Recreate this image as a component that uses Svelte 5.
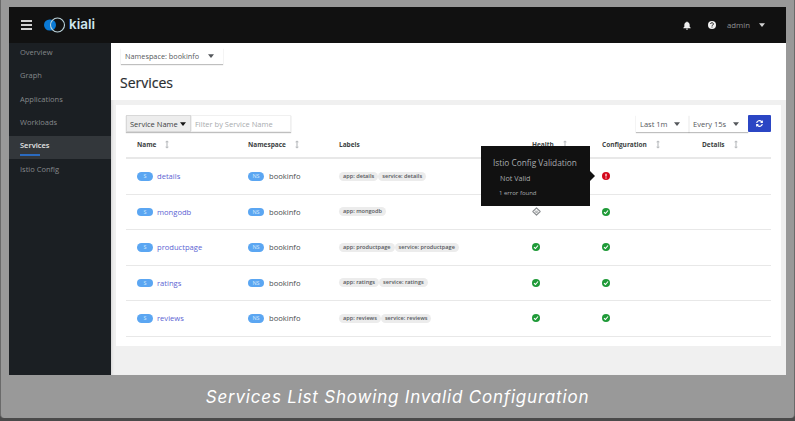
<script>
  const navItems = ['Overview', 'Graph', 'Applications', 'Workloads', 'Services', 'Istio Config'];
  const activeNav = 'Services';
  const services = [
    { name: 'details', labels: ['app: details', 'service: details'], health: 'none', config: 'error' },
    { name: 'mongodb', labels: ['app: mongodb'], health: 'na', config: 'ok' },
    { name: 'productpage', labels: ['app: productpage', 'service: productpage'], health: 'ok', config: 'ok' },
    { name: 'ratings', labels: ['app: ratings', 'service: ratings'], health: 'ok', config: 'ok' },
    { name: 'reviews', labels: ['app: reviews', 'service: reviews'], health: 'ok', config: 'ok' }
  ];
  const columns = [
    { title: 'Name', sort: true },
    { title: 'Namespace', sort: true },
    { title: 'Labels', sort: false },
    { title: 'Health', sort: true },
    { title: 'Configuration', sort: true },
    { title: 'Details', sort: true }
  ];
</script>

{#snippet caret()}
  <svg class="caret" viewBox="0 0 8 5" width="6" height="4"><path d="M0 0h8L4 5z" fill="currentColor" /></svg>
{/snippet}

{#snippet sortIcon()}
  <svg class="sort" viewBox="0 0 5 10" width="4" height="9">
    <path d="M2.5 0 5 2.2H3.2v5.6H5L2.5 10 0 7.800h1.800V2.200H0z" fill="#b8bbbe" />
  </svg>
{/snippet}

{#snippet statusOk()}
  <svg class="status" viewBox="0 0 16 16" width="8" height="8">
    <circle cx="8" cy="8" r="8" fill="#1f9a38" />
    <path d="M4 8.500 7 11l5-6" fill="none" stroke="#fff" stroke-width="2.200" />
  </svg>
{/snippet}

{#snippet statusError()}
  <svg class="status" viewBox="0 0 16 16" width="8" height="8">
    <circle cx="8" cy="8" r="8" fill="#d4071b" />
    <path d="M8 3.500v5.500M8 11v2" stroke="#fff" stroke-width="2.400" />
  </svg>
{/snippet}

{#snippet statusNa()}
  <svg class="status" viewBox="0 0 16 16" width="9" height="9">
    <path d="M8 1.500 14.500 8 8 14.500 1.500 8z" fill="none" stroke="#8a8d90" stroke-width="2" stroke-linejoin="round" />
    <path d="M5 7.500h6M6 10h4" stroke="#8a8d90" stroke-width="1.400" />
  </svg>
{/snippet}

<div class="frame">
  <div class="window">
    <header class="masthead">
      <svg class="burger" viewBox="0 0 11 10" width="11" height="10">
        <path d="M0 0h11v2H0zM0 4h11v2H0zM0 8h11v2H0z" fill="#d2d2d2" />
      </svg>
      <svg class="logo" viewBox="0 0 22 16" width="22" height="16">
        <rect x="0" y="2.500" width="12" height="11" rx="5.500" fill="#0a7ad6" />
        <circle cx="13.500" cy="8" r="7" fill="none" stroke="#bcd4dc" stroke-width="1.100" />
      </svg>
      <span class="brand">kiali</span>
      <div class="tools">
        <svg viewBox="0 0 12 12" width="8" height="9"><path d="M6 0a1 1 0 0 1 1 1c2 .5 3 2 3 4v3l1.500 1.500v.5H.5v-.5L2 8V5c0-2 1-3.500 3-4a1 1 0 0 1 1-1zM4.500 11h3a1.500 1.500 0 0 1-3 0z" fill="#f0f0f0" /></svg>
        <svg class="help" viewBox="0 0 16 16" width="8" height="8"><circle cx="8" cy="8" r="8" fill="#f0f0f0" /><path d="M5.200 6a2.800 2.600 0 1 1 3.800 2.400c-.7.300-1 .7-1 1.400M8 11v2" fill="none" stroke="#111" stroke-width="1.800" /></svg>
        <span class="user">admin</span>
        <span class="user-caret">{@render caret()}</span>
      </div>
    </header>

    <div class="body">
      <nav class="sidebar">
        {#each navItems as item}
          <div class="nav-item" class:active={item === activeNav}>
            <span>{item}</span>
          </div>
        {/each}
      </nav>

      <main class="content">
        <section class="top">
          <div class="namespace">
            <span>Namespace: bookinfo</span>
            {@render caret()}
          </div>
          <h1>Services</h1>
        </section>

        <section class="card">
          <div class="toolbar">
            <div class="filter">
              <div class="filter-type">Service Name <span class="dark-caret">{@render caret()}</span></div>
              <div class="filter-input">Filter by Service Name</div>
            </div>
            <div class="actions">
              <div class="select range"><span>Last 1m</span>{@render caret()}</div>
              <div class="select every"><span>Every 15s</span>{@render caret()}</div>
              <button class="refresh" aria-label="Refresh">
                <svg viewBox="0 0 16 16" width="9" height="9">
                  <path d="M2 7a6 6 0 0 1 10.300-3.300L14 2v5H9l1.800-1.800A4 4 0 0 0 4 7zM14 9a6 6 0 0 1-10.300 3.300L2 14V9h5l-1.800 1.800A4 4 0 0 0 12 9z" fill="#fff" />
                </svg>
              </button>
            </div>
          </div>

          <div class="table">
            <div class="row head">
              {#each columns as col}
                <div class="th"><span>{col.title}</span>{#if col.sort}{@render sortIcon()}{/if}</div>
              {/each}
            </div>
            {#each services as svc}
              <div class="row">
                <div class="td"><span class="pill">S</span><a href="#top">{svc.name}</a></div>
                <div class="td"><span class="pill">NS</span><span class="ns">bookinfo</span></div>
                <div class="td labels">
                  {#each svc.labels as label}<span class="label">{label}</span>{/each}
                </div>
                <div class="td health">
                  {#if svc.health === 'ok'}{@render statusOk()}{:else if svc.health === 'na'}{@render statusNa()}{/if}
                </div>
                <div class="td">
                  {#if svc.config === 'ok'}{@render statusOk()}{:else}{@render statusError()}{/if}
                </div>
                <div class="td"></div>
              </div>
            {/each}
          </div>

          <div class="tooltip">
            <div class="tip-title">Istio Config Validation</div>
            <div class="tip-state">Not Valid</div>
            <div class="tip-count">1 error found</div>
          </div>
        </section>
      </main>
    </div>
  </div>
  <p class="caption">Services List Showing Invalid Configuration</p>
</div>

<style>
  :global(body) {
    margin: 0;
    background: #4a4a4a;
    font-family: "Open Sans", "Liberation Sans", sans-serif;
  }

  .frame {
    box-sizing: border-box;
    width: 795px;
    height: 418px;
    padding: 7px 8px 0;
    background: #999;
    border: solid #6a6a6a;
    border-width: 0 1px;
    border-radius: 0 0 4px 4px;
    overflow: hidden;
  }

  .window {
    height: 368px;
    display: flex;
    flex-direction: column;
    overflow: hidden;
  }

  .masthead {
    flex: none;
    height: 36px;
    background: #111;
    display: flex;
    align-items: center;
    padding: 0 0 0 12px;
    color: #d2d2d2;
  }

  .logo {
    margin-left: 12px;
  }

  .brand {
    margin-left: 3px;
    font: 600 13.500px/1 "Inter", sans-serif;
    color: #cfe6ee;
  }

  .tools {
    margin-left: auto;
    display: flex;
    align-items: center;
    padding-right: 21px;
  }

  .help {
    margin-left: 17px;
  }

  .user {
    margin-left: 11px;
    font-size: 7.800px;
    color: #8f9295;
  }

  .user-caret {
    margin-left: 9px;
    display: flex;
    color: #d2d2d2;
  }

  .body {
    flex: 1;
    display: flex;
    min-height: 0;
  }

  .sidebar {
    flex: none;
    width: 102px;
    background: #1b1f23;
  }

  .nav-item {
    position: relative;
    height: 23.300px;
    box-sizing: border-box;
    padding: 0 0 5px 11px;
    display: flex;
    align-items: center;
    font-size: 7.500px;
    color: #85888b;
  }

  .nav-item.active {
    background: #33373b;
    color: #e6e6e6;
    font-weight: 600;
  }

  .nav-item.active::after {
    content: "";
    position: absolute;
    left: 11px;
    top: 18px;
    width: 20px;
    height: 2px;
    background: #2b6bc0;
  }

  .content {
    flex: 1;
    min-width: 0;
    background: #f0f0f0;
    display: flex;
    flex-direction: column;
    box-shadow: inset 3px 0 3px -2px rgba(0, 0, 0, 0.12);
  }

  .top {
    flex: none;
    height: 57px;
    box-sizing: border-box;
    background: #fff;
    padding: 5px 0 0 10px;
  }

  .namespace {
    width: 102px;
    height: 16px;
    box-sizing: border-box;
    padding: 0 9px 0 4px;
    display: flex;
    align-items: center;
    justify-content: space-between;
    font-size: 7.300px;
    color: #55585c;
    box-shadow: 0 1px 1px rgba(0, 0, 0, 0.25);
  }

  h1 {
    margin: 11px 0 0 -1px;
    font-size: 14px;
    font-weight: 400;
    line-height: 16px;
    color: #2a2d30;
    -webkit-text-stroke: 0.2px #2a2d30;
  }

  .card {
    position: relative;
    flex: none;
    height: 241px;
    box-sizing: border-box;
    margin: 5px 5px 0 5px;
    padding: 10px 10px 0;
    background: #fff;
  }

  .toolbar {
    display: flex;
    justify-content: space-between;
    height: 17px;
  }

  .filter {
    display: flex;
    box-shadow: 0 1px 1px rgba(0, 0, 0, 0.25);
  }

  .filter-type {
    width: 65px;
    box-sizing: border-box;
    padding-left: 3px;
    display: flex;
    align-items: center;
    gap: 2px;
    font-size: 7.500px;
    background: #ededed;
    border: 1px solid #d8d8d8;
    color: #3c3f42;
    white-space: nowrap;
  }

  .dark-caret {
    display: flex;
    color: #151515;
  }

  .filter-input {
    width: 100px;
    box-sizing: border-box;
    padding-left: 3px;
    display: flex;
    align-items: center;
    font-size: 7.500px;
    color: #a8abae;
    border: 1px solid #f0f0f0;
  }

  .actions {
    display: flex;
  }

  .select {
    box-sizing: border-box;
    display: flex;
    align-items: center;
    justify-content: space-between;
    padding: 0 9px 0 4px;
    font-size: 7.500px;
    color: #55585c;
    box-shadow: 0 1px 1px rgba(0, 0, 0, 0.25);
  }

  .range {
    width: 53px;
  }

  .every {
    width: 59px;
  }

  .refresh {
    width: 23px;
    padding: 0;
    border: 0;
    border-radius: 1px;
    background: #2b46c4;
    display: flex;
    align-items: center;
    justify-content: center;
  }

  .row {
    display: grid;
    grid-template-columns: 111px 91px 193px 70px 100px 1fr;
    height: 35.500px;
    box-sizing: border-box;
    padding-left: 11px;
    border-bottom: 1px solid #e8e8e8;
    align-items: center;
  }

  .row.head {
    height: 27px;
    border-bottom-width: 2px;
  }

  .th {
    display: flex;
    align-items: center;
    gap: 9px;
    font-size: 6.500px;
    font-weight: 700;
    color: #3c3f42;
  }

  .td {
    display: flex;
    align-items: center;
    font-size: 7.600px;
    color: #4a4d50;
  }

  .pill {
    width: 16px;
    height: 8.500px;
    margin-right: 4px;
    border-radius: 5px;
    background: #5ba6f2;
    color: #d5e8fb;
    font-size: 5.500px;
    line-height: 9px;
    text-align: center;
  }

  .pill + .ns {
    margin-left: 1px;
  }

  a {
    color: #5b63d3;
    text-decoration: none;
  }

  .ns {
    color: #4a4d50;
  }

  .label {
    padding: 0 4px;
    height: 9px;
    border-radius: 5px;
    background: #ececec;
    font-size: 5.600px;
    font-weight: 600;
    line-height: 9px;
    color: #55585c;
  }

  .status {
    display: block;
  }

  .tooltip {
    position: absolute;
    left: 365px;
    top: 41px;
    width: 109px;
    height: 60px;
    box-sizing: border-box;
    padding: 11px 0 0 12px;
    background: #111;
    color: #a9acaf;
    font-size: 8.300px;
  }

  .tooltip::after {
    content: "";
    position: absolute;
    right: -5px;
    top: 25px;
    border-left: 5px solid #111;
    border-top: 5px solid transparent;
    border-bottom: 5px solid transparent;
  }

  .tip-title {
    line-height: 11px;
  }

  .tip-state {
    margin: 5px 0 0 7px;
    font-size: 7.200px;
    line-height: 10px;
  }

  .tip-count {
    margin: 6px 0 0 6px;
    font-size: 6px;
    line-height: 9px;
  }

  .caption {
    margin: 12px 0 0;
    text-align: center;
    font: italic 400 17px/20px "Inter", sans-serif;
    letter-spacing: 0.8px;
    color: #fff;
  }
</style>
